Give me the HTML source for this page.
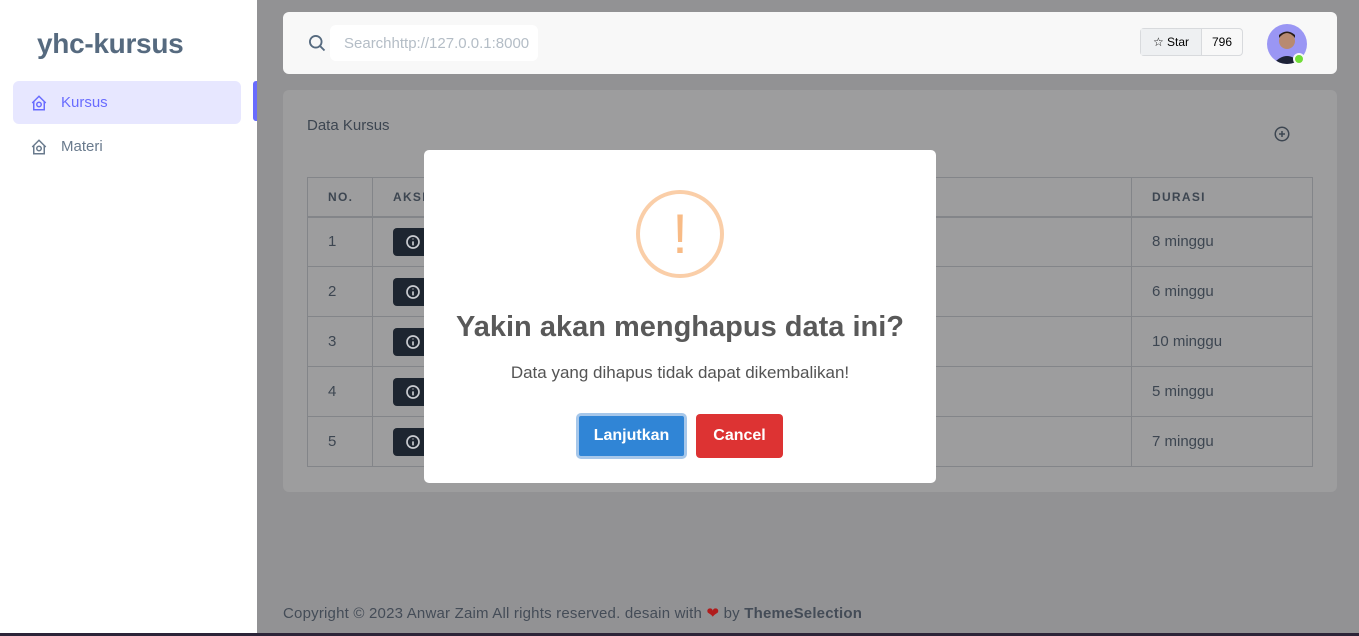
<!DOCTYPE html>
<html><head><meta charset="utf-8"><style>
*{box-sizing:border-box;margin:0;padding:0}
body{width:1359px;height:636px;overflow:hidden;font-family:"Liberation Sans",sans-serif;background:#929294;position:relative}
.side{position:absolute;left:0;top:0;width:257px;height:633px;background:#fff}
.logo{position:absolute;left:37px;top:28px;font-size:28px;font-weight:bold;color:#566a7f;letter-spacing:-0.3px}
.nav{position:absolute;left:13px;width:228px;height:43px;border-radius:6px;font-size:15px;display:flex;align-items:center;padding-left:17px}
.nav svg{margin-right:13px}
.act{top:81px;background:#e7e7ff;color:#696cff}
.mat{top:125px;color:#697a8d}
.bar{position:absolute;left:253px;top:81px;width:4px;height:40px;background:#696cff;border-radius:3px 0 0 3px}
.top{position:absolute;left:283px;top:12px;width:1054px;height:62px;background:#f8f8f8;border-radius:6px}
.srch{position:absolute;left:47px;top:13px;width:208px;height:36px;background:#fff;border-radius:6px;color:#b4bdc6;font-size:15px;padding:10px 14px;white-space:nowrap;overflow:hidden}
.star{position:absolute;left:857px;top:16px;width:103px;height:28px;border:1px solid #d8dadd;border-radius:4px;font-size:12px;display:flex}
.star div{display:flex;align-items:center;justify-content:center}
.av{position:absolute;left:984px;top:12px;width:40px;height:40px;border-radius:50%;background:#9a96f4;overflow:hidden}
.dot{position:absolute;left:1010px;top:41px;width:12px;height:12px;border-radius:50%;background:#71dd37;border:2px solid #f8f8f8}
.card{position:absolute;left:283px;top:90px;width:1054px;height:402px;background:#9d9d9e;border-radius:6px}
.title{position:absolute;left:24px;top:27px;font-size:15px;color:#3d4651}
table{position:absolute;left:24px;top:87px;width:1006px;border-collapse:collapse;font-size:15px;color:#3d4651}
td,th{border:1px solid #838589;height:50px;padding-left:20px;text-align:left}
th{height:39px;font-size:12px;letter-spacing:1.3px;color:#3d4651;border-bottom:2px solid #838589}
.ib{display:inline-block;width:40px;height:28px;background:#1d2530;border-radius:4px;vertical-align:middle;padding:6px 0 0 12px}
.foot{position:absolute;left:283px;top:604px;font-size:15px;color:#444c57;letter-spacing:0.2px}
.line{position:absolute;left:0;top:633px;width:1359px;height:3px;background:#2c2438}
.modal{position:absolute;left:424px;top:150px;width:512px;height:333px;background:#fff;border-radius:5px;text-align:center}
.ic{position:absolute;left:212px;top:40px;width:88px;height:88px;border:4px solid #facea8;border-radius:50%;color:#f8bb86;font-size:56px;line-height:80px}
.mh{position:absolute;left:0;right:0;top:161px;font-size:29px;color:#595959;font-weight:600}
.mp{position:absolute;left:0;right:0;top:213px;font-size:17px;color:#545454}
.b1{position:absolute;left:152px;top:263px;width:111px;height:46px;background:#3085d6;border:3px solid #a6c7ea;border-radius:5px;color:#fff;font-size:16px;font-weight:bold;line-height:40px}
.b2{position:absolute;left:272px;top:264px;width:87px;height:44px;background:#dd3333;border-radius:4px;color:#fff;font-size:16px;font-weight:bold;line-height:44px}
</style></head><body>
<div class="side">
<div class="logo">yhc-kursus</div>
<div class="nav act"><svg width="18" height="18" viewBox="0 0 24 24" fill="none" stroke="#696cff" stroke-width="2"><path d="M3 12L12 3l9 9M5 10v11h14V10"/><circle cx="12" cy="14" r="3"/></svg>Kursus</div>
<div class="nav mat"><svg width="18" height="18" viewBox="0 0 24 24" fill="none" stroke="#697a8d" stroke-width="2"><path d="M3 12L12 3l9 9M5 10v11h14V10"/><circle cx="12" cy="14" r="3"/></svg>Materi</div>
</div>
<div class="bar"></div>
<div class="top">
<svg style="position:absolute;left:24px;top:21px" width="20" height="20" viewBox="0 0 24 24" fill="none" stroke="#566a7f" stroke-width="2.2"><circle cx="10.5" cy="10.5" r="7"/><path d="M16 16l5 5"/></svg>
<div class="srch">Searchhttp://127.0.0.1:8000</div>
<div class="star"><div style="width:61px;background:#eef0f2;border-right:1px solid #d8dadd">☆&nbsp;Star</div><div style="flex:1">796</div></div>
<div class="av"><svg width="40" height="40"><circle cx="20" cy="17" r="8" fill="#b88a70"/><path d="M12 14q8-10 16 0v-3q-8-7-16 0z" fill="#2a1e18"/><path d="M6 40q14-16 28 0z" fill="#1d2236"/></svg></div>
<div class="dot"></div>
</div>
<div class="card">
<div class="title">Data Kursus</div>
<svg style="position:absolute;left:990px;top:35px" width="18" height="18" viewBox="0 0 24 24" fill="none" stroke="#3d4651" stroke-width="2"><circle cx="12" cy="12" r="9"/><path d="M12 8v8M8 12h8"/></svg>
<table>
<tr><th style="width:65px">NO.</th><th>AKSI</th><th style="width:181px">DURASI</th></tr>
<tr><td>1</td><td><span class="ib"><svg width="16" height="16" viewBox="0 0 24 24" fill="none" stroke="#c8cbd0" stroke-width="2.5"><circle cx="12" cy="12" r="9"/><path d="M12 11v6M12 7v1"/></svg></span></td><td>8 minggu</td></tr>
<tr><td>2</td><td><span class="ib"><svg width="16" height="16" viewBox="0 0 24 24" fill="none" stroke="#c8cbd0" stroke-width="2.5"><circle cx="12" cy="12" r="9"/><path d="M12 11v6M12 7v1"/></svg></span></td><td>6 minggu</td></tr>
<tr><td>3</td><td><span class="ib"><svg width="16" height="16" viewBox="0 0 24 24" fill="none" stroke="#c8cbd0" stroke-width="2.5"><circle cx="12" cy="12" r="9"/><path d="M12 11v6M12 7v1"/></svg></span></td><td>10 minggu</td></tr>
<tr><td>4</td><td><span class="ib"><svg width="16" height="16" viewBox="0 0 24 24" fill="none" stroke="#c8cbd0" stroke-width="2.5"><circle cx="12" cy="12" r="9"/><path d="M12 11v6M12 7v1"/></svg></span></td><td>5 minggu</td></tr>
<tr><td>5</td><td><span class="ib"><svg width="16" height="16" viewBox="0 0 24 24" fill="none" stroke="#c8cbd0" stroke-width="2.5"><circle cx="12" cy="12" r="9"/><path d="M12 11v6M12 7v1"/></svg></span></td><td>7 minggu</td></tr>
</table>
</div>
<div class="foot">Copyright © 2023 Anwar Zaim All rights reserved. desain with <span style="color:#b01c1c">❤</span> by <b>ThemeSelection</b></div>
<div class="line"></div>
<div class="modal">
<div class="ic">!</div>
<div class="mh">Yakin akan menghapus data ini?</div>
<div class="mp">Data yang dihapus tidak dapat dikembalikan!</div>
<div class="b1">Lanjutkan</div>
<div class="b2">Cancel</div>
</div>
</body></html>
